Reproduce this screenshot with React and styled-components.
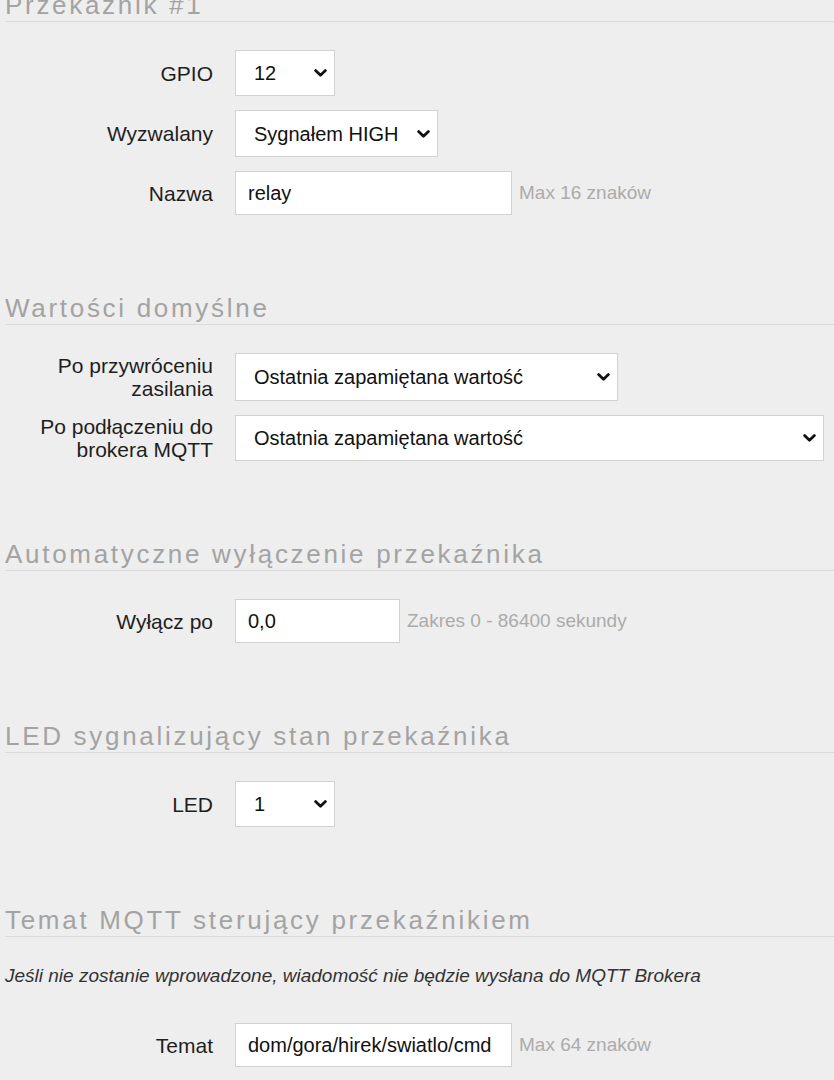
import React from 'react';
import styled, { createGlobalStyle } from 'styled-components';

const GlobalStyle = createGlobalStyle`
  html, body {
    margin: 0;
    padding: 0;
    background: #eeeeee;
    overflow: hidden;
  }
  body {
    font-family: "Liberation Sans", Arial, sans-serif;
  }
`;

const Page = styled.div`
  margin-top: -10px;
  padding-left: 5px;
`;

const Section = styled.section`
  margin-bottom: 78px;
`;

const Heading = styled.h2`
  margin: 0 0 28px;
  padding-bottom: 1px;
  font-size: 26px;
  line-height: 30px;
  font-weight: normal;
  letter-spacing: 2.7px;
  color: #a3a3a3;
  border-bottom: 1px solid #dadada;
  white-space: nowrap;
`;

const Note = styled.p`
  margin: 25px 0 36px;
  font-size: 19px;
  line-height: 22px;
  font-style: italic;
  color: #333;
`;

const Rows = styled.div`
  display: flex;
  flex-direction: column;
  gap: 14px;
`;

const Row = styled.div`
  display: flex;
  align-items: center;
`;

const Label = styled.label`
  width: 208px;
  margin-right: 22px;
  text-align: right;
  font-size: 21px;
  line-height: 23px;
  color: #1e1e1e;
`;

const Field = styled.div`
  position: relative;
  width: ${p => p.$w}px;
  height: ${p => p.$h || 46}px;
`;

const Select = styled.select`
  appearance: none;
  -webkit-appearance: none;
  box-sizing: border-box;
  width: 100%;
  height: 100%;
  margin: 0;
  padding: 0 0 0 18px;
  border: 1px solid #d2d2d2;
  border-radius: 0;
  background: #fff;
  font-family: "Liberation Sans", Arial, sans-serif;
  font-size: 20px;
  color: #111;
  outline: none;
`;

const Input = styled.input`
  box-sizing: border-box;
  width: 100%;
  height: 100%;
  margin: 0;
  padding: 0 12px;
  border: 1px solid #d2d2d2;
  border-radius: 0;
  background: #fff;
  font-family: "Liberation Sans", Arial, sans-serif;
  font-size: 20px;
  color: #111;
  outline: none;
`;

const Chevron = styled.svg`
  position: absolute;
  right: 8px;
  top: 50%;
  margin-top: -4px;
  width: 13px;
  height: 8px;
  pointer-events: none;
`;

const Hint = styled.span`
  margin-left: 7px;
  font-size: 19px;
  color: #ababab;
`;

const Arrow = () => (
  <Chevron viewBox="0 0 13 8">
    <polyline points="1.6,1.6 6.5,6.2 11.4,1.6" fill="none" stroke="#111" strokeWidth="2.8" strokeLinecap="round" strokeLinejoin="round" />
  </Chevron>
);

const SelectField = ({ w, h, value, options }) => (
  <Field $w={w} $h={h}>
    <Select defaultValue={value}>
      {options.map(o => <option key={o}>{o}</option>)}
    </Select>
    <Arrow />
  </Field>
);

const InputField = ({ w, value }) => (
  <Field $w={w} $h={44}>
    <Input defaultValue={value} />
  </Field>
);

const defaults = ['Ostatnia zapamiętana wartość', 'Włączony', 'Wyłączony'];

export default function App() {
  return (
    <>
      <GlobalStyle />
      <Page>
        <Section>
          <Heading>Przekaźnik #1</Heading>
          <Rows>
            <Row>
              <Label>GPIO</Label>
              <SelectField w={100} value="12" options={['0', '2', '4', '5', '12', '13', '14', '15']} />
            </Row>
            <Row>
              <Label>Wyzwalany</Label>
              <SelectField w={203} h={47} value="Sygnałem HIGH" options={['Sygnałem HIGH', 'Sygnałem LOW']} />
            </Row>
            <Row>
              <Label>Nazwa</Label>
              <InputField w={277} value="relay" />
              <Hint>Max 16 znaków</Hint>
            </Row>
          </Rows>
        </Section>

        <Section>
          <Heading>Wartości domyślne</Heading>
          <Rows>
            <Row>
              <Label>Po przywróceniu<br />zasilania</Label>
              <SelectField w={383} h={48} value={defaults[0]} options={defaults} />
            </Row>
            <Row>
              <Label>Po podłączeniu do<br />brokera MQTT</Label>
              <SelectField w={589} value={defaults[0]} options={defaults} />
            </Row>
          </Rows>
        </Section>

        <Section>
          <Heading>Automatyczne wyłączenie przekaźnika</Heading>
          <Rows>
            <Row>
              <Label>Wyłącz po</Label>
              <InputField w={165} value="0,0" />
              <Hint>Zakres 0 - 86400 sekundy</Hint>
            </Row>
          </Rows>
        </Section>

        <Section>
          <Heading>LED sygnalizujący stan przekaźnika</Heading>
          <Rows>
            <Row>
              <Label>LED</Label>
              <SelectField w={100} value="1" options={['Brak', '1', '2', '3']} />
            </Row>
          </Rows>
        </Section>

        <Section>
          <Heading>Temat MQTT sterujący przekaźnikiem</Heading>
          <Note>Jeśli nie zostanie wprowadzone, wiadomość nie będzie wysłana do MQTT Brokera</Note>
          <Rows>
            <Row>
              <Label>Temat</Label>
              <InputField w={277} value="dom/gora/hirek/swiatlo/cmd" />
              <Hint>Max 64 znaków</Hint>
            </Row>
          </Rows>
        </Section>
      </Page>
    </>
  );
}
